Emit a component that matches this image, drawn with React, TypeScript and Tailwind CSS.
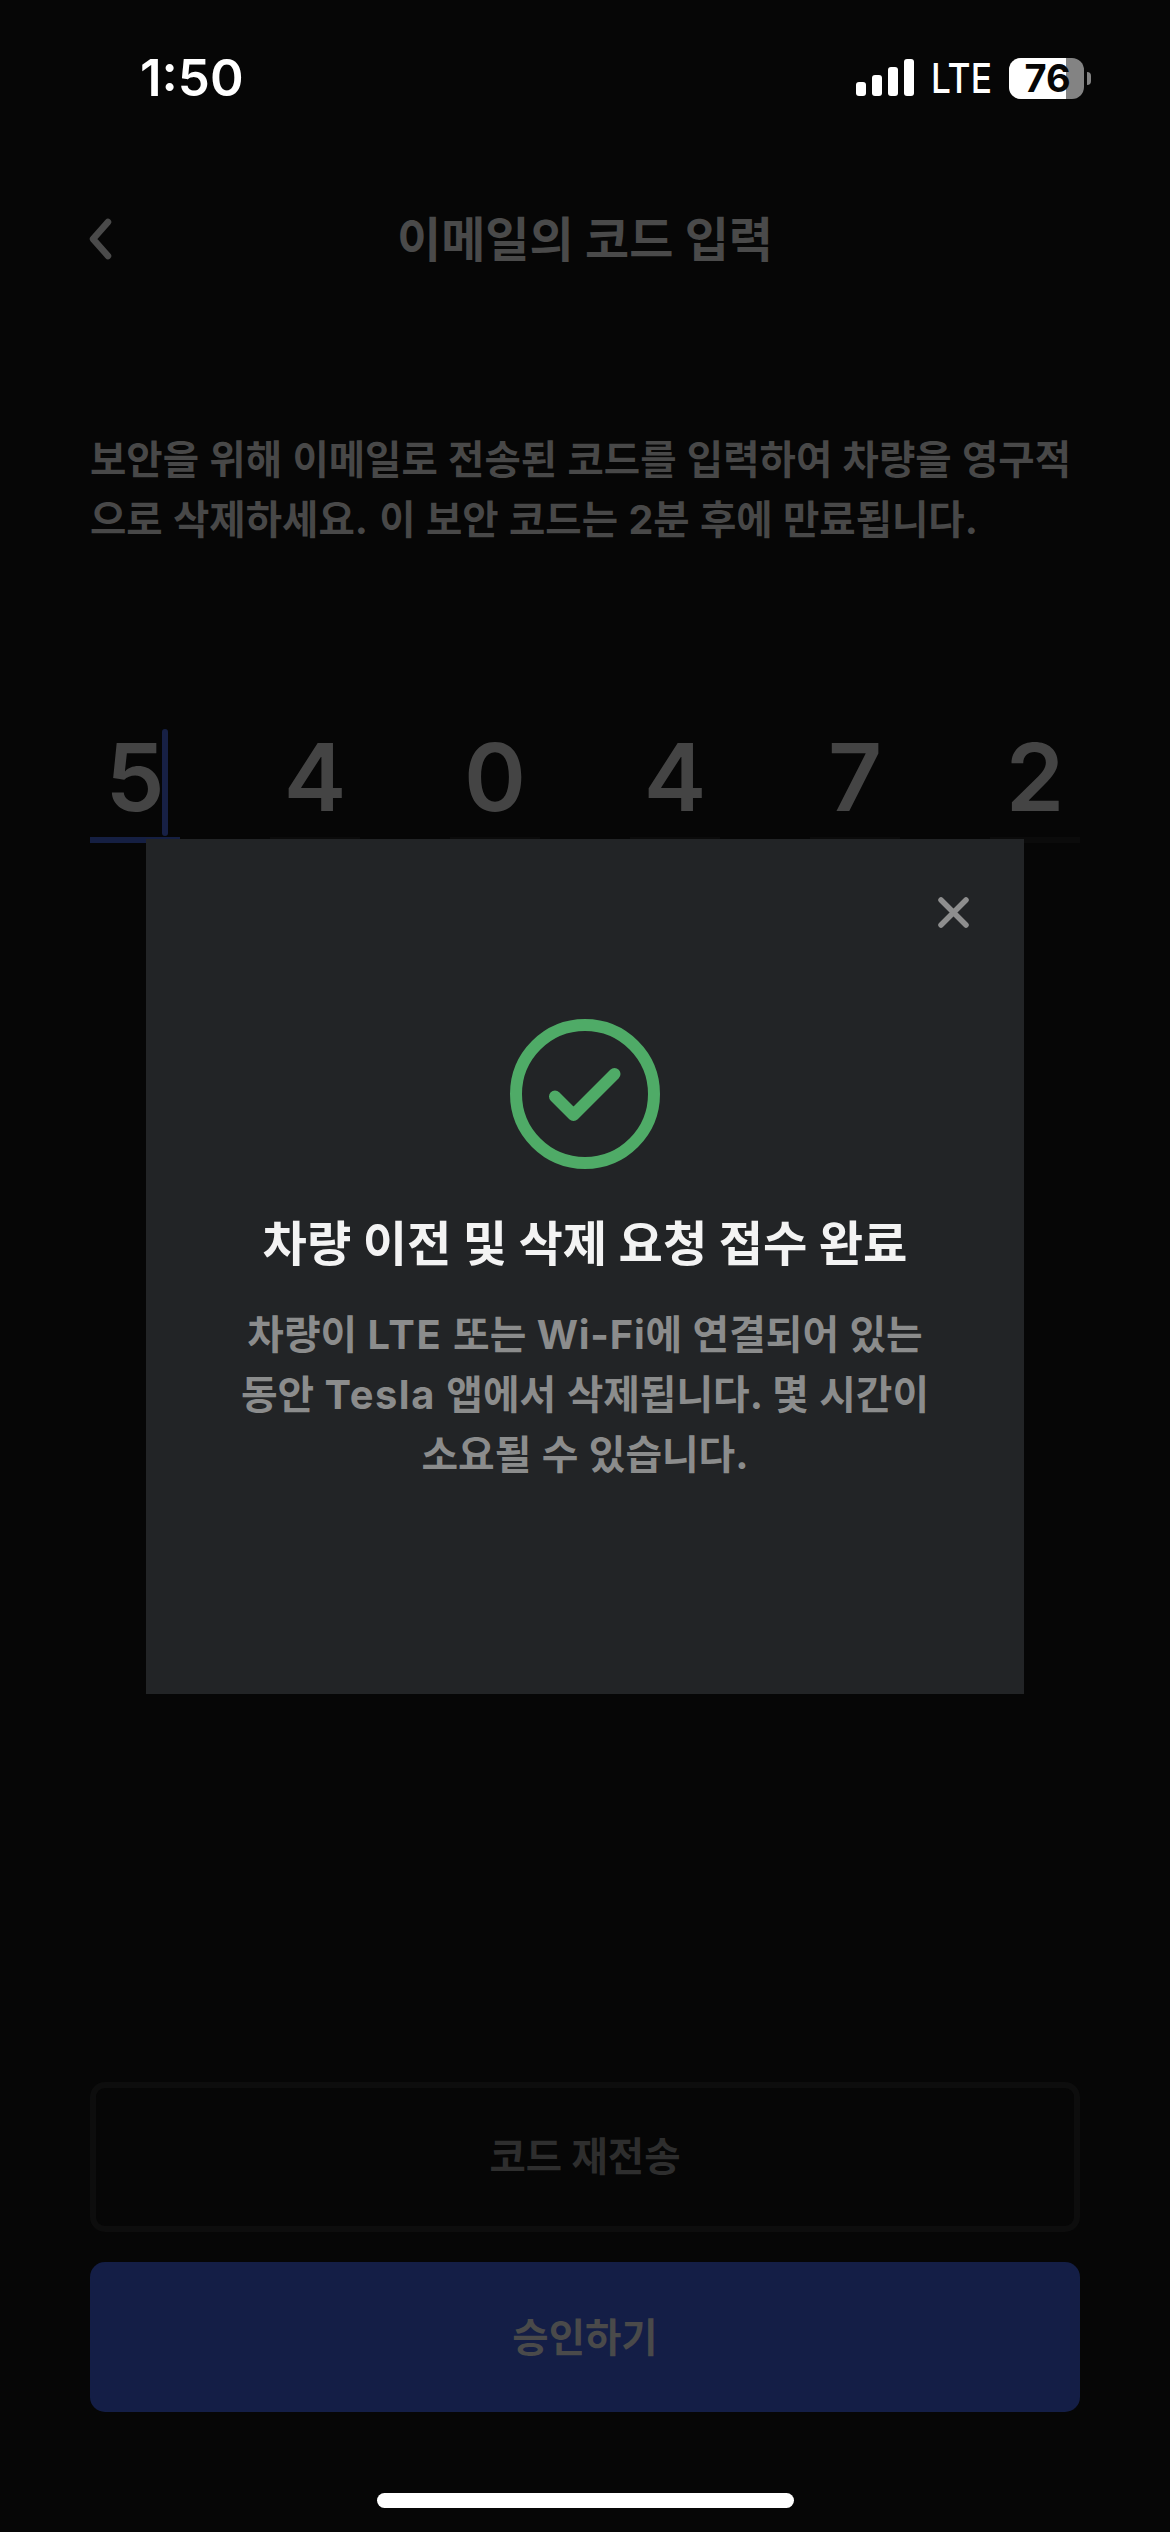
const digits = ['5', '4', '0', '4', '7', '2'];

function StatusBar() {
  return (
    <div className="flex h-[156px] items-start justify-between pl-[140px] pr-[79px]">
      <span className="pt-[48px] text-[51px] font-semibold leading-[60px] text-white">1:50</span>
      <div className="flex items-center pt-[57px]">
        <svg width="58" height="38" viewBox="0 0 58 38" fill="#fff">
          <rect x="0" y="23" width="10" height="14" rx="3" />
          <rect x="16" y="16" width="10" height="21" rx="3" />
          <rect x="32" y="8" width="10" height="29" rx="3" />
          <rect x="48" y="0" width="10" height="37" rx="3" />
        </svg>
        <div className="ml-[17px] w-[78px]">
          <span className="inline-block origin-left scale-x-[0.86] whitespace-nowrap align-top text-[41px] font-medium leading-[42px] text-white">
            LTE
          </span>
        </div>
        <div className="relative flex h-[41px] w-[75px] items-center justify-center rounded-[12px] bg-[#838383]">
          <div className="absolute left-0 top-0 h-full w-[57px] rounded-l-[12px] bg-white" />
          <span className="relative -mr-[2px] text-[38px] font-bold leading-[41px] text-[#060606]">76</span>
        </div>
        <div className="ml-[3px] h-[13px] w-[4px] rounded-r-full bg-[#838383]" />
      </div>
    </div>
  );
}

function Header() {
  return (
    <div className="relative flex h-[165px] items-center justify-center pt-[2px]">
      <svg className="absolute left-[88px] top-[62px]" width="24" height="42" viewBox="0 0 24 42" fill="none">
        <path d="M20 4 L5 21 L20 38" stroke="#4a4a4a" strokeWidth="6.5" strokeLinecap="round" strokeLinejoin="round" />
      </svg>
      <h1 className="text-[48px] font-bold leading-[60px] text-[#4a4a4a]">이메일의 코드 입력</h1>
    </div>
  );
}

function CodeInput() {
  return (
    <div className="mt-[174px] flex justify-between px-[90px]">
      {digits.map((digit, i) => (
        <div
          key={i}
          className={`relative flex h-[120px] w-[90px] items-center justify-center border-b-[6px] pb-[6px] ${
            i === 0 ? 'border-[#151f42]' : 'border-[#0b0b0b]'
          }`}
        >
          <span className="text-[94px] font-semibold leading-[108px] text-[#444]">{digit}</span>
          {i === 0 && (
            <span className="absolute left-[72px] top-[6px] h-[107px] w-[6px] rounded-full bg-[#172045]" />
          )}
        </div>
      ))}
    </div>
  );
}

function SuccessModal() {
  return (
    <div className="absolute left-[146px] top-[839px] flex h-[855px] w-[878px] flex-col items-center bg-[#222426]">
      <button className="mr-[55px] mt-[58px] self-end">
        <svg width="31" height="31" viewBox="0 0 31 31" fill="none">
          <path d="M3 3 L28 28 M28 3 L3 28" stroke="#8e8e8e" strokeWidth="5.5" strokeLinecap="round" />
        </svg>
      </button>
      <svg className="mt-[91px]" width="150" height="150" viewBox="0 0 150 150" fill="none" stroke="#4fab67" strokeWidth="12">
        <circle cx="75" cy="75" r="69" />
        <path d="M45 77.500 L63.500 96 L104.500 55" strokeLinecap="round" strokeLinejoin="round" />
      </svg>
      <h2 className="mt-[45px] whitespace-nowrap text-[48.2px] font-bold leading-[60px] text-[#f3f3f3]">
        차량 이전 및 삭제 요청 접수 완료
      </h2>
      <p className="mt-[31px] whitespace-nowrap text-center text-[39.8px] font-bold leading-[60px] text-[#8b8c8c] [word-spacing:1px]">
        차량이 <span className="tracking-[1.8px]">LTE</span> 또는{' '}
        <span className="tracking-[0.8px]">Wi-Fi</span>에 연결되어 있는
        <br />
        동안 <span className="tracking-[1.6px]">Tesla</span> 앱에서 삭제됩니다. 몇 시간이
        <br />
        소요될 수 있습니다.
      </p>
    </div>
  );
}

export default function App() {
  return (
    <div className="relative flex h-[2532px] w-[1170px] flex-col overflow-hidden bg-[#060606] font-['Inter','Noto_Sans_CJK_KR',sans-serif]">
      <StatusBar />
      <Header />
      <p className="mt-[109px] -mb-px whitespace-nowrap pl-[90px] text-[39.5px] font-bold leading-[60px] text-[#484848] [word-spacing:1px]">
        보안을 위해 이메일로 전송된 코드를 입력하여 차량을 영구적
        <br />
        으로 삭제하세요<span className="tracking-[1px]">.</span> 이 보안 코드는 2분 후에 만료됩니다.
      </p>
      <CodeInput />
      <div className="mt-auto flex flex-col gap-[30px] px-[90px]">
        <button className="h-[150px] rounded-[15px] border-[6px] border-[#0d0d0d] pt-[2px] text-[39.5px] font-bold text-[#2e2e2e]">
          코드 재전송
        </button>
        <button className="h-[150px] rounded-[15px] bg-[#141e46] pt-[4px] text-[39.5px] font-bold text-[#4a4a4a]">
          승인하기
        </button>
      </div>
      <div className="mx-auto mb-[24px] mt-[81px] h-[15px] w-[417px] rounded-full bg-white" />
      <SuccessModal />
    </div>
  );
}
